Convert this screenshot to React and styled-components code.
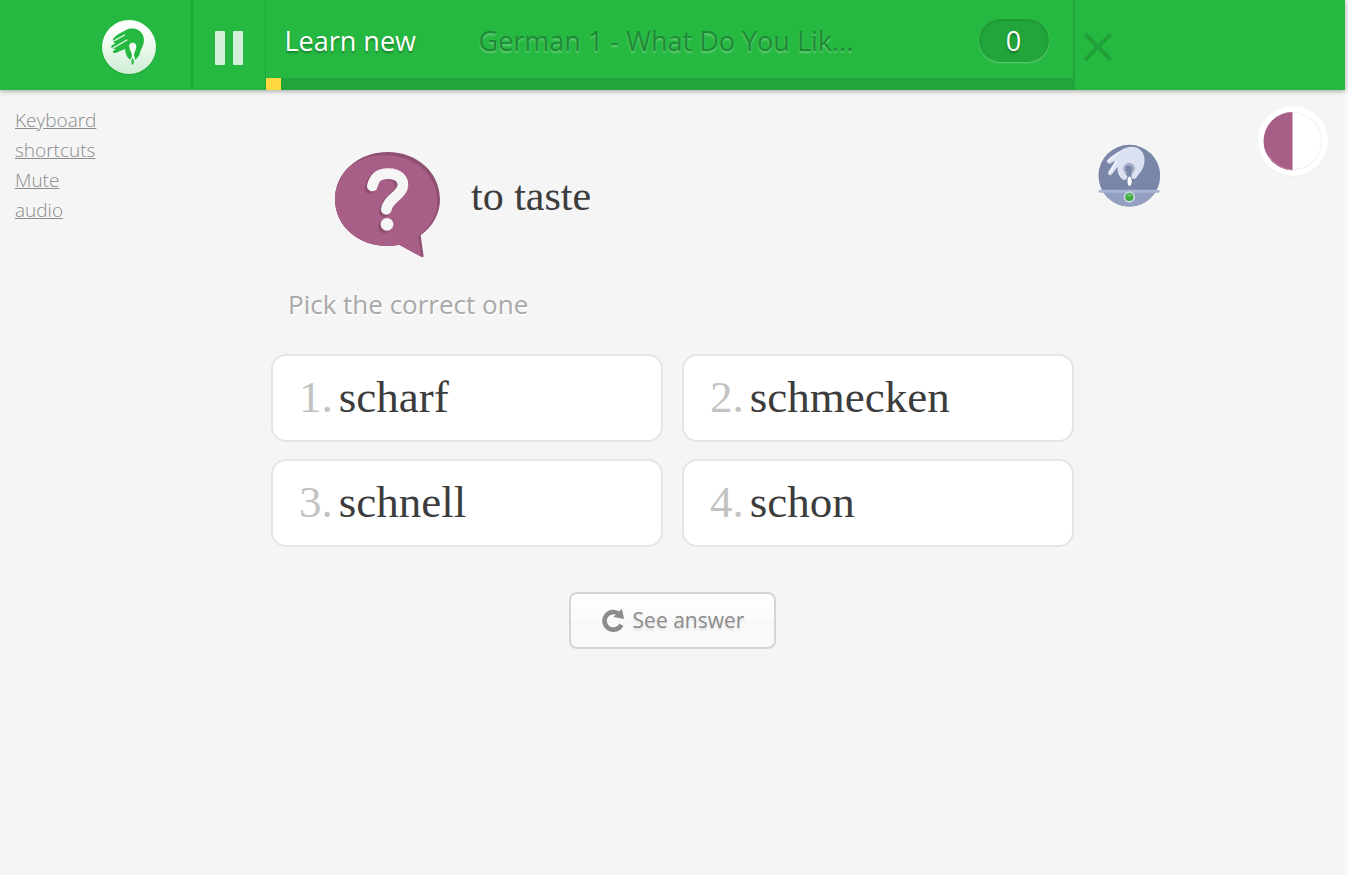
import React from "react";
import styled, { createGlobalStyle } from "styled-components";

const GlobalStyle = createGlobalStyle`
  *, *::before, *::after { box-sizing: border-box; }
  html { background: #f8f8f8; }
  body {
    margin: 0;
    font-family: "Open Sans", "Noto Sans", sans-serif;
    color: #3c3c3c;
  }
  button { font: inherit; cursor: pointer; }
`;

const Page = styled.div`
  min-height: 100vh;
  margin-right: 3px;
  background: #f5f5f5;
`;

const Header = styled.header`
  background: #25b941;
  box-shadow: 0 1px 5px rgba(0, 0, 0, 0.35);
`;

const HeaderInner = styled.div`
  display: flex;
  height: 90px;
  max-width: 1170px;
  margin: 0 auto;
`;

const LogoLink = styled.a`
  flex: none;
  width: 103px;
  padding: 17px 0 0 11px;
`;

const Divided = styled.div`
  flex: none;
  border-left: 2px solid #22a53a;
`;

const PauseButton = styled.button`
  display: flex;
  align-items: center;
  justify-content: center;
  width: 72px;
  height: 90px;
  padding: 5px 0 0;
  border: 0;
  background: none;
`;

const Session = styled(Divided)`
  flex: 0 1 808px;
  display: flex;
  flex-direction: column;
  min-width: 0;
  border-left-width: 1px;
`;

const SessionRow = styled.div`
  flex: 1;
  display: flex;
  align-items: center;
  padding: 3px 24px 0 19px;
`;

const Mode = styled.strong`
  flex: none;
  width: 194px;
  font-size: 27px;
  line-height: 40px;
  font-weight: 400;
  color: #fff;
  text-shadow: 0 2px 2px rgba(0, 0, 0, 0.3);
`;

const Course = styled.h1`
  flex: 1;
  margin: 0;
  font-size: 27px;
  line-height: 40px;
  font-weight: 400;
  color: #1f8a35;
  white-space: nowrap;
  text-shadow: 0 2px 2px rgba(255, 255, 255, 0.3);
`;

const Score = styled.output`
  flex: none;
  width: 70px;
  height: 43px;
  border-radius: 22px;
  background: #22a53a;
  box-shadow: inset 0 1px 3px rgba(0, 0, 0, 0.15), 0 1px 2px rgba(255, 255, 255, 0.3);
  color: #fff;
  font-size: 27px;
  line-height: 44px;
  text-align: center;
  text-shadow: 0 2px 2px rgba(0, 0, 0, 0.3);
`;

const Progress = styled.div`
  height: 12px;
  background: #22a53a;
`;

const ProgressFill = styled.div`
  width: 15px;
  height: 12px;
  background: #ffd83f;
`;

const CloseButton = styled.button`
  width: 46px;
  height: 90px;
  padding: 8px 0 0;
  border: 0;
  background: none;
`;

const Body = styled.div`
  display: grid;
  grid-template-columns: 1fr minmax(0, 803px) 1fr;
`;

const Shortcuts = styled.nav`
  display: flex;
  flex-direction: column;
  align-items: flex-start;
  padding: 15px;
`;

const ShortcutLink = styled.a`
  width: 84px;
  font-size: 19px;
  line-height: 30px;
  font-weight: 300;
  color: #8c8c8c;
`;

const Aside = styled.aside`
  display: flex;
  align-items: flex-start;
  justify-content: space-between;
  padding: 16px 17px 0 24px;
`;

const GrowthBadge = styled.div`
  margin-top: 38px;
  line-height: 0;
`;

const Timer = styled.div`
  width: 70px;
  height: 71px;
  line-height: 0;
`;

const Main = styled.main`
  display: flex;
  flex-direction: column;
`;

const Prompt = styled.div`
  display: flex;
  padding: 61px 0 0 63px;
  gap: 30px;
`;

const Question = styled.h2`
  margin: 0;
  padding-top: 21px;
  font: 400 42px/48px "Liberation Serif", serif;
`;

const Instruction = styled.h3`
  margin: 24px 0 0 17px;
  font-size: 26px;
  line-height: 44px;
  font-weight: 400;
  color: #a9a9a9;
  text-shadow: 1px 2px 0 #fff;
`;

const Choices = styled.ol`
  display: grid;
  grid-template-columns: 1fr 1fr;
  gap: 17px 19px;
  margin: 28px 0 0;
  padding: 0;
  list-style: none;
`;

const Choice = styled.button`
  display: flex;
  align-items: center;
  gap: 6px;
  width: 100%;
  height: 88px;
  padding: 0 24px 2px 26px;
  border: 2px solid #e5e5e5;
  border-radius: 15px;
  background: #fff;
  color: #3c3c3c;
  font: 400 45px/52px "Liberation Serif", serif;
  text-align: left;
`;

const ChoiceNumber = styled.span`
  color: #c3c3c3;
`;

const AnswerButton = styled.button`
  display: flex;
  align-items: center;
  align-self: center;
  gap: 8px;
  height: 57px;
  margin-top: 45px;
  padding: 0 30px 2px;
  border: 2px solid #d5d5d5;
  border-radius: 8px;
  background: linear-gradient(#fefefe, #fbfbfb 50%, #f8f8f8 50%, #fafafa);
  font-size: 21px;
  line-height: 30px;
  color: #8c8c8c;
  text-shadow: 0 2px 2px rgba(0, 0, 0, 0.1);
`;

const choices = ["scharf", "schmecken", "schnell", "schon"];

const Logo = () => (
  <svg width="60" height="60" viewBox="-3 -3 180 180" aria-hidden="true">
    <defs>
      <linearGradient id="logo-fill" x1="0" y1="0" x2="0" y2="1">
        <stop offset="0" stopColor="#fff" />
        <stop offset="0.2" stopColor="#fbfefb" />
        <stop offset="1" stopColor="#cfeed5" />
      </linearGradient>
    </defs>
    <circle cx="87" cy="90" r="82" fill="#1e9d36" opacity="0.45" />
    <circle cx="87" cy="87" r="81" fill="url(#logo-fill)" />
    <path
      fill="#25b941"
      d="M42 59 C50 51 66 42 78 36 C89 31 103 30 114 36 C129 44 134 60 131 75 C128 89 120 97 118 112 L106 126 L101 115 L97 120 L91 125 C80 119 77 106 75 93 L49 104 C42 107 36 103 40 98 L49 92 C40 95 31 89 34 84 C37 81 43 78 46 76 C39 74 36 65 42 59 Z"
    />
    <path d="M40 70 L75 50 M38 91 L82 65" fill="none" stroke="#f5fcf6" strokeWidth="3.5" />
    <path
      fill="#f3fbf4"
      d="M98 74 C106 74 110 80 109 86 C108 95 103 102 102 111 L105 126 L92 126 L96 112 C95 103 89 97 88 88 C86 80 91 74 98 74 Z"
    />
    <path fill="#25b941" d="M98 120 C102 125 103 132 99 140 L96 140 C93 132 94 125 98 120 Z" />
  </svg>
);

const PauseIcon = () => (
  <svg width="28" height="34" viewBox="0 0 28 34" aria-hidden="true">
    <rect x="0" y="0" width="10" height="34" rx="1" fill="#d3f1d9" />
    <rect x="18" y="0" width="10" height="34" rx="1" fill="#d3f1d9" />
  </svg>
);

const CloseIcon = () => (
  <svg width="30" height="30" viewBox="0 0 30 30" aria-hidden="true">
    <path d="M2 2 L28 28 M28 2 L2 28" stroke="#219f38" strokeWidth="4" />
  </svg>
);

const bubble =
  "M203 36 C292 36 360 98 360 178 C360 222 338 260 302 286 L311 350 L305 351 L237 314 C225 317 214 318 203 318 C114 318 45 258 45 178 C45 98 114 36 203 36 Z";

const QuestionBubble = () => (
  <svg width="107" height="107" viewBox="42 33 321 321" aria-hidden="true">
    <defs>
      <clipPath id="bubble-clip">
        <path d={bubble} />
      </clipPath>
    </defs>
    <path d={bubble} fill="#8f5073" />
    <g clipPath="url(#bubble-clip)">
      <path
        d="M194 45 C283 45 352 105 352 185 C352 225 331 262 293 288 L305 352 L237 314 C225 317 214 318 203 318 L40 318 L30 178 C45 98 114 45 194 45 Z"
        fill="#a85f87"
      />
    </g>
    <g fill="none" strokeLinecap="round" strokeLinejoin="round" strokeWidth="32">
      <path d="M149 146 C158 112 170 104 199 105 C230 106 244 124 239 147 C234 170 197 179 193 215" stroke="#8f5073" />
      <path d="M157 138 C164 110 178 101 204 101 C237 101 254 120 247 144 C239 168 203 179 199 208" stroke="#f5f5f5" />
    </g>
    <circle cx="193" cy="260" r="19" fill="#8f5073" />
    <circle cx="201" cy="253" r="19" fill="#f5f5f5" />
  </svg>
);

const GrowthIcon = () => (
  <svg width="63" height="63" viewBox="7 7 189 189" role="img" aria-label="Planting">
    <defs>
      <clipPath id="badge-clip">
        <circle cx="101" cy="102" r="92.5" />
      </clipPath>
    </defs>
    <circle cx="101" cy="102" r="92.5" fill="#7986a8" />
    <rect x="7" y="148" width="189" height="50" fill="#939fc0" clipPath="url(#badge-clip)" />
    <rect x="9" y="144" width="183" height="9" rx="4.5" fill="#aab4d0" />
    <path fill="none" stroke="#b2bcd9" strokeWidth="13" strokeLinecap="round" d="M44 93 L68 58 M41 60 L78 34" />
    <path
      fill="#dce1f1"
      d="M36 54 C45 45 62 33 76 26 C92 14 117 12 131 22 C146 33 150 53 144 72 C140 88 129 96 122 108 C116 115 106 112 107 104 C107 96 117 90 117 79 C116 69 107 64 98 65 C87 66 82 75 84 85 C86 94 92 98 95 104 C96 114 86 118 79 112 C69 103 64 91 66 76 L48 98 C43 104 36 99 38 92 L58 58 L46 63 C37 67 30 60 36 54 Z"
    />
    <path d="M38 57 L70 34 M42 93 L64 60" fill="none" stroke="#f1f4fb" strokeWidth="4" strokeLinecap="round" />
    <path d="M92 96 C80 82 87 68 100 68 C114 69 117 82 107 94" fill="none" stroke="#aab4d0" strokeWidth="5" />
    <path fill="#fff" d="M101 104 C110 110 110 124 104 132 L99 132 C94 123 94 110 101 104 Z" />
    <circle cx="101" cy="166" r="17" fill="#cdd7e8" />
    <circle cx="101" cy="166" r="12" fill="#3cab37" />
    <ellipse cx="101" cy="161" rx="8" ry="5" fill="#69c266" />
  </svg>
);

const TimerIcon = () => (
  <svg width="70" height="71" viewBox="0 0 70 71" role="img" aria-label="Half of the time left">
    <circle cx="35" cy="36" r="35" fill="#ededed" />
    <circle cx="35" cy="35" r="35" fill="#fff" />
    <circle cx="35" cy="35" r="28.5" fill="none" stroke="#f5f5f5" strokeWidth="1.5" />
    <path d="M34.5 6 A29 29 0 0 0 34.5 64 Z" fill="#a85f87" />
    <path d="M10 49 A29 29 0 0 0 34.5 64" fill="none" stroke="#c18ba9" strokeWidth="1" />
  </svg>
);

const RetryIcon = () => (
  <svg width="24" height="24" viewBox="125 88 72 72" aria-hidden="true">
    <path d="M186 138 A26.5 26.5 0 1 1 179 106" fill="none" stroke="#8c8c8c" strokeWidth="14" />
    <path d="M188 90 L194 121 L162 115 Z" fill="#8c8c8c" />
  </svg>
);

export default function App() {
  return (
    <Page>
      <GlobalStyle />
      <Header>
        <HeaderInner>
          <LogoLink href="#home" aria-label="Home">
            <Logo />
          </LogoLink>
          <Divided>
            <PauseButton type="button" aria-label="Pause">
              <PauseIcon />
            </PauseButton>
          </Divided>
          <Session>
            <SessionRow>
              <Mode>Learn new</Mode>
              <Course>German 1 - What Do You Lik...</Course>
              <Score>0</Score>
            </SessionRow>
            <Progress>
              <ProgressFill />
            </Progress>
          </Session>
          <Divided>
            <CloseButton type="button" aria-label="Close">
              <CloseIcon />
            </CloseButton>
          </Divided>
        </HeaderInner>
      </Header>
      <Body>
        <Shortcuts>
          <ShortcutLink href="#shortcuts">Keyboard shortcuts</ShortcutLink>
          <ShortcutLink href="#mute">
            Mute
            <br />
            audio
          </ShortcutLink>
        </Shortcuts>
        <Main>
          <Prompt>
            <QuestionBubble />
            <Question>to taste</Question>
          </Prompt>
          <Instruction>Pick the correct one</Instruction>
          <Choices>
            {choices.map((word, index) => (
              <li key={word}>
                <Choice type="button">
                  <ChoiceNumber>{index + 1}.</ChoiceNumber>
                  <span>{word}</span>
                </Choice>
              </li>
            ))}
          </Choices>
          <AnswerButton type="button">
            <RetryIcon />
            See answer
          </AnswerButton>
        </Main>
        <Aside>
          <GrowthBadge>
            <GrowthIcon />
          </GrowthBadge>
          <Timer>
            <TimerIcon />
          </Timer>
        </Aside>
      </Body>
    </Page>
  );
}
